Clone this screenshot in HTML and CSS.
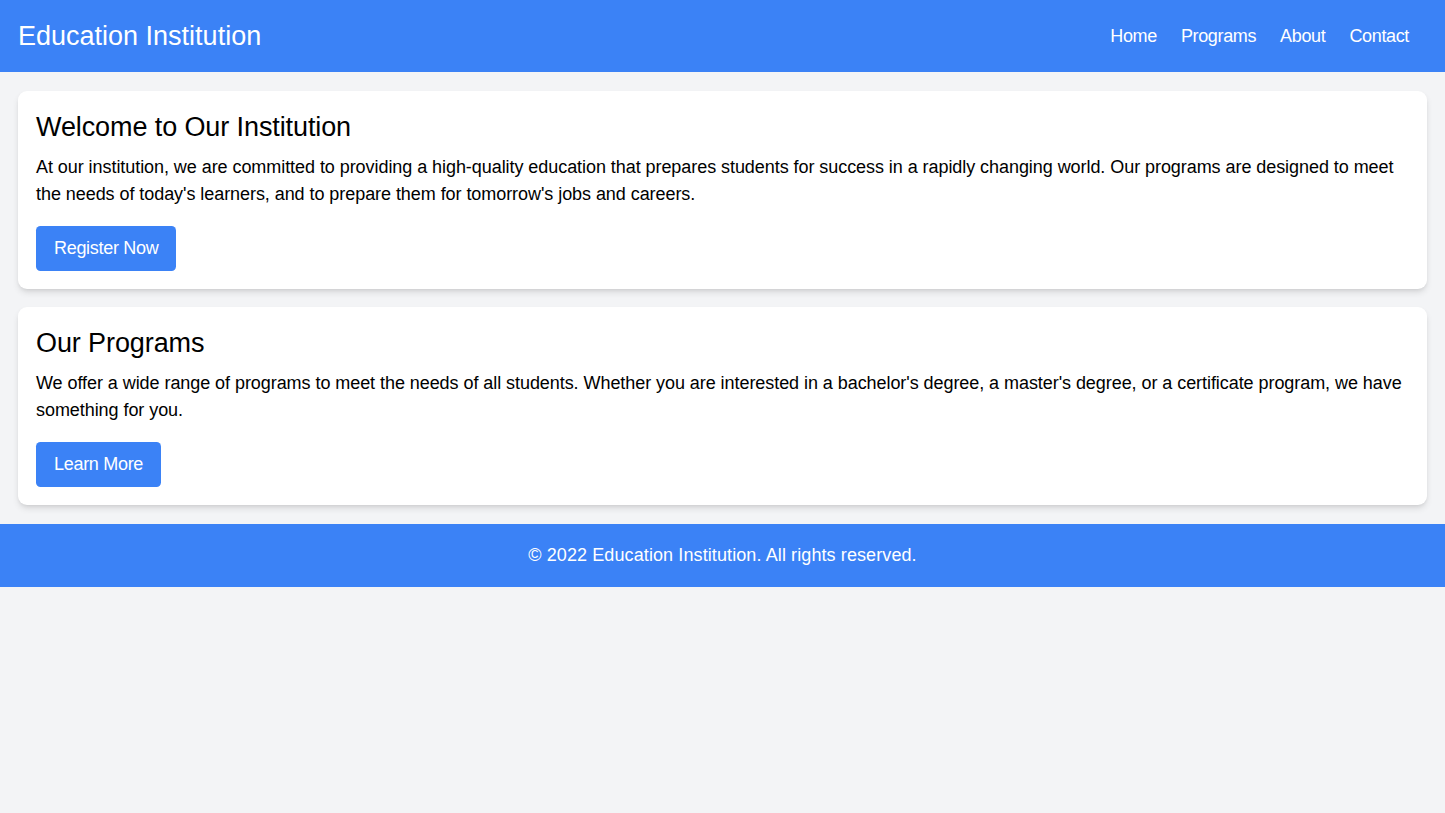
FILE: index.html
```
<!DOCTYPE html>
<html lang="en">
<head>
<meta charset="utf-8">
<title>Education Institution</title>
<link rel="stylesheet" href="styles.css">
</head>
<body>
<header class="site-header">
  <h1 class="brand">Education Institution</h1>
  <nav class="nav">
    <a href="#" class="nav-link">Home</a>
    <a href="#" class="nav-link">Programs</a>
    <a href="#" class="nav-link">About</a>
    <a href="#" class="nav-link">Contact</a>
  </nav>
</header>
<main class="main">
  <section class="card">
    <h2 class="card-title">Welcome to Our Institution</h2>
    <p class="card-text">At our institution, we are committed to providing a high-quality education that prepares students for success in a rapidly changing world. Our programs are designed to meet the needs of today's learners, and to prepare them for tomorrow's jobs and careers.</p>
    <a href="#" class="btn">Register Now</a>
  </section>
  <section class="card">
    <h2 class="card-title">Our Programs</h2>
    <p class="card-text">We offer a wide range of programs to meet the needs of all students. Whether you are interested in a bachelor's degree, a master's degree, or a certificate program, we have something for you.</p>
    <a href="#" class="btn">Learn More</a>
  </section>
</main>
<footer class="site-footer">
  <p class="footer-text">&copy; 2022 Education Institution. All rights reserved.</p>
</footer>
</body>
</html>
```
FILE: styles.css
```
* { box-sizing: border-box; }
html, body { margin: 0; padding: 0; }
body {
  background: #f3f4f6;
  font-family: "Liberation Sans", Arial, sans-serif;
  font-size: 18px;
  line-height: 27px;
  color: #000;
}
.site-header {
  background: #3b82f6;
  color: #fff;
  display: flex;
  justify-content: space-between;
  align-items: center;
  padding: 18px 18px;
  height: 72px;
}
.brand {
  margin: 0;
  font-size: 27px;
  line-height: 36px;
  font-weight: 400;
}
.nav {
  display: flex;
  gap: 24px;
  padding-right: 18px;
}
.nav-link {
  color: #fff;
  text-decoration: none;
  font-size: 18px;
  line-height: 27px;
  letter-spacing: -0.35px;
}
.main {
  padding: 19px 18px 19px;
  display: flex;
  flex-direction: column;
  gap: 18px;
}
.card {
  background: #fff;
  border-radius: 9px;
  padding: 18px;
  box-shadow: 0 4px 7px -1px rgba(0,0,0,0.12), 0 2px 4px -2px rgba(0,0,0,0.1);
}
.card-title {
  margin: 0 0 9px;
  font-size: 27px;
  line-height: 36px;
  font-weight: 400;
  letter-spacing: -0.1px;
}
.card-text {
  margin: 0 0 18px;
  letter-spacing: -0.06px;
}
.btn {
  display: inline-block;
  background: #3b82f6;
  color: #fff;
  text-decoration: none;
  padding: 9px 18px;
  border-radius: 4.5px;
  line-height: 27px;
  letter-spacing: -0.3px;
}
.site-footer {
  background: #3b82f6;
  color: #fff;
  text-align: center;
  padding: 18px;
}
.footer-text {
  margin: 0;
  letter-spacing: 0.1px;
}
```
